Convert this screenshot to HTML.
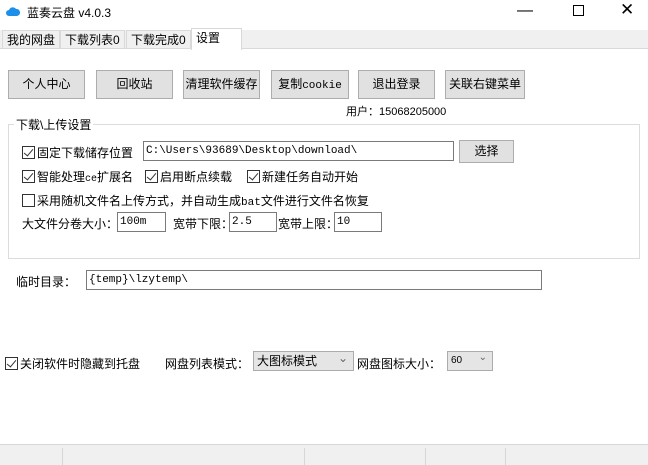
<!DOCTYPE html><html><head><meta charset="utf-8"><style>
*{box-sizing:border-box;margin:0;padding:0}
body{width:648px;height:465px;background:#fff;font-family:"Liberation Sans","Noto Sans CJK SC",sans-serif;font-size:12px;color:#000;position:relative;overflow:hidden}
.a{position:absolute;white-space:nowrap}
.btn{position:absolute;top:70px;height:29px;background:#e1e1e1;border:1px solid #adadad;text-align:center;line-height:27px;font-size:12px}
.cb{display:inline-block;width:13px;height:13px;border:1px solid #333;vertical-align:-2px;margin-right:2px;position:relative;background:#fff}
.cb.c:after{content:"";position:absolute;left:3px;top:0px;width:4px;height:8px;border:solid #333;border-width:0 1.5px 1.5px 0;transform:rotate(40deg)}
.in{position:absolute;border:1px solid #7a7a7a;background:#fff;height:20px;line-height:18px;padding-left:2px;font-family:"Liberation Mono","Noto Sans CJK SC",monospace;font-size:11px}
.sel{position:absolute;height:20px;background:#e5e5e5;border:1px solid #acacac;line-height:18px;padding-left:3px}
.sel:after{content:"⌄";position:absolute;right:5px;top:-3px;color:#666}
.tab{position:absolute;top:30px;height:19px;line-height:18px;background:#f0f0f0;border:1px solid #d9d9d9;padding:0 4px}
</style></head><body>
<svg class="a" style="left:6px;top:6px" width="14" height="10"><path d="M3 10 A3 3 0 0 1 3 4 A4 4 0 0 1 10 3 A3.5 3.5 0 0 1 11 10 Z" fill="#1e8fe8"/></svg>
<div class="a" style="left:27px;top:4px;font-size:12px">蓝奏云盘 v4.0.3</div>
<div class="a" style="left:517px;top:2px;font-size:16px">&#8212;</div>
<div class="a" style="left:573px;top:5px;width:11px;height:11px;border:1px solid #000"></div>
<div class="a" style="left:620px;top:0px;font-size:17px;font-weight:300">✕</div>
<div class="a" style="left:0;top:30px;width:648px;height:19px;background:#f0f0f0;border-bottom:1px solid #d9d9d9"></div>
<div class="tab" style="left:2px">我的网盘</div>
<div class="tab" style="left:60px">下载列表0</div>
<div class="tab" style="left:126px">下载完成0</div>
<div class="tab" style="left:191px;top:28px;height:22px;width:51px;background:#fff;border-bottom:none">设置</div>
<div class="btn" style="left:8px;width:77px">个人中心</div>
<div class="btn" style="left:96px;width:77px">回收站</div>
<div class="btn" style="left:183px;width:77px">清理软件缓存</div>
<div class="btn" style="left:271px;width:78px">复制<span style="font-family:'Liberation Mono';font-size:11px">cookie</span></div>
<div class="btn" style="left:358px;width:77px">退出登录</div>
<div class="btn" style="left:445px;width:80px">关联右键菜单</div>
<div class="a" style="left:346px;top:103px;font-size:11px">用户：15068205000</div>
<div class="a" style="left:8px;top:124px;width:632px;height:135px;border:1px solid #dcdcdc"></div>
<div class="a" style="left:14px;top:116px;background:#fff;padding:0 2px">下载\上传设置</div>
<div class="a" style="left:22px;top:144px"><span class="cb c"></span>固定下载储存位置</div>
<div class="in" style="left:143px;top:141px;width:311px">C:\Users\93689\Desktop\download\</div>
<div class="btn" style="left:459px;top:140px;width:55px;height:23px;line-height:21px">选择</div>
<div class="a" style="left:22px;top:168px"><span class="cb c"></span>智能处理<span style="font-family:'Liberation Mono';font-size:10px">ce</span>扩展名</div>
<div class="a" style="left:145px;top:168px"><span class="cb c"></span>启用断点续载</div>
<div class="a" style="left:247px;top:168px"><span class="cb c"></span>新建任务自动开始</div>
<div class="a" style="left:22px;top:192px"><span class="cb"></span>采用随机文件名上传方式，并自动生成<span style="font-family:'Liberation Mono';font-size:11px">bat</span>文件进行文件名恢复</div>
<div class="a" style="left:22px;top:215px">大文件分卷大小：</div>
<div class="in" style="left:117px;top:212px;width:49px">100m</div>
<div class="a" style="left:173px;top:215px">宽带下限：</div>
<div class="in" style="left:229px;top:212px;width:48px">2.5</div>
<div class="a" style="left:278px;top:215px">宽带上限：</div>
<div class="in" style="left:334px;top:212px;width:48px">10</div>
<div class="a" style="left:16px;top:273px">临时目录：</div>
<div class="in" style="left:86px;top:270px;width:456px">{temp}\lzytemp\</div>
<div class="a" style="left:5px;top:355px"><span class="cb c"></span>关闭软件时隐藏到托盘</div>
<div class="a" style="left:165px;top:355px">网盘列表模式：</div>
<div class="sel" style="left:253px;top:351px;width:101px">大图标模式</div>
<div class="a" style="left:357px;top:355px">网盘图标大小：</div>
<div class="sel" style="left:447px;top:351px;width:46px;font-size:10px">60</div>
<div class="a" style="left:0;top:444px;width:648px;height:21px;background:#f0f0f0;border-top:1px solid #d7d7d7"></div>
<div class="a" style="left:62px;top:448px;width:1px;height:17px;background:#d7d7d7"></div>
<div class="a" style="left:304px;top:448px;width:1px;height:17px;background:#d7d7d7"></div>
<div class="a" style="left:425px;top:448px;width:1px;height:17px;background:#d7d7d7"></div>
<div class="a" style="left:505px;top:448px;width:1px;height:17px;background:#d7d7d7"></div>
</body></html>
